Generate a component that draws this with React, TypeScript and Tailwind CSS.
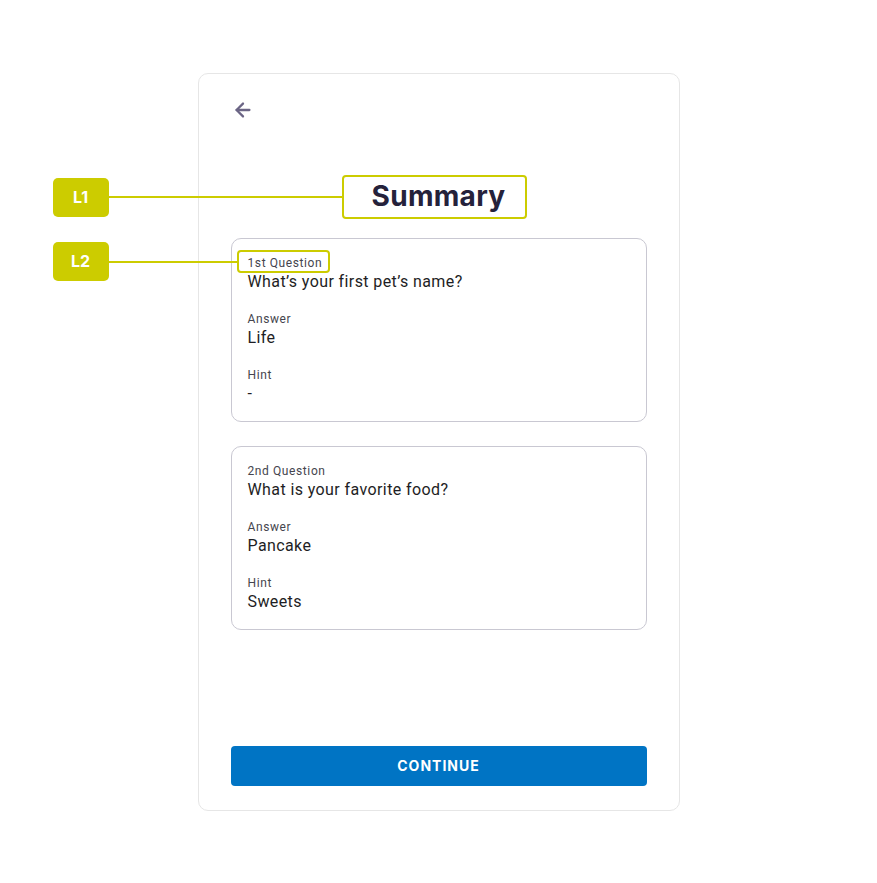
import React from "react";
import { ArrowLeft } from "lucide-react";

const questions = [
  { label: "1st Question", question: "What’s your first pet’s name?", answer: "Life", hint: "-" },
  { label: "2nd Question", question: "What is your favorite food?", answer: "Pancake", hint: "Sweets" },
];

function Field({ label, value, first }: { label: string; value: string; first?: boolean }) {
  return (
    <div className={first ? "" : "mt-[18px]"}>
      <div className="text-[12px] leading-4 font-normal tracking-[0.6px] text-[#45454e]">{label}</div>
      <div className="text-[16px] leading-[22px] tracking-[0.4px] text-[#1e1e24]">{value}</div>
    </div>
  );
}

export default function App() {
  return (
    <div className="flex h-screen w-full items-center justify-center bg-white font-['Roboto',sans-serif]">
      <div className="relative">
        <div className="flex h-[738px] w-[482px] flex-col rounded-[10px] border border-[#e6e6e6] bg-white px-8 pt-6 pb-6">
          <button className="flex h-6 w-6 items-center justify-center text-[#6b6585]">
            <ArrowLeft size={22} strokeWidth={2.5} />
          </button>
          <h1 className="mt-[56px] text-center font-['Inter',sans-serif] text-[28px] leading-9 font-bold tracking-[0.3px] text-[#25223b]">
            Summary
          </h1>
          <div className="mt-6 flex flex-col gap-6">
            {questions.map((q) => (
              <div key={q.label} className="rounded-[10px] border border-[#c9c8d2] px-4 pt-4 pb-4">
                <Field label={q.label} value={q.question} first />
                <Field label="Answer" value={q.answer} />
                <Field label="Hint" value={q.hint} />
              </div>
            ))}
          </div>
          <div className="flex-1" />
          <button className="h-10 w-full rounded-[4px] bg-[#0074c4] font-['Inter',sans-serif] text-[14px] font-bold tracking-[1px] text-white">
            CONTINUE
          </button>
        </div>

        {/* annotations */}
        <div className="absolute top-[105px] left-[-145px] flex h-[39px] w-[56px] items-center justify-center rounded-[5px] bg-[#cccc00] font-['Inter',sans-serif] text-[16px] font-bold text-white">
          L1
        </div>
        <div className="absolute top-[123px] left-[-89px] h-[2px] w-[233px] bg-[#cccc00]" />
        <div className="absolute top-[102px] left-[144px] h-[44px] w-[185px] rounded-[4px] border-2 border-[#cccc00]" />

        <div className="absolute top-[169px] left-[-145px] flex h-[39px] w-[56px] items-center justify-center rounded-[5px] bg-[#cccc00] font-['Inter',sans-serif] text-[16px] font-bold text-white">
          L2
        </div>
        <div className="absolute top-[188px] left-[-89px] h-[2px] w-[128px] bg-[#cccc00]" />
        <div className="absolute top-[177px] left-[39px] h-[23px] w-[93px] rounded-[4px] border-2 border-[#cccc00]" />
      </div>
    </div>
  );
}
